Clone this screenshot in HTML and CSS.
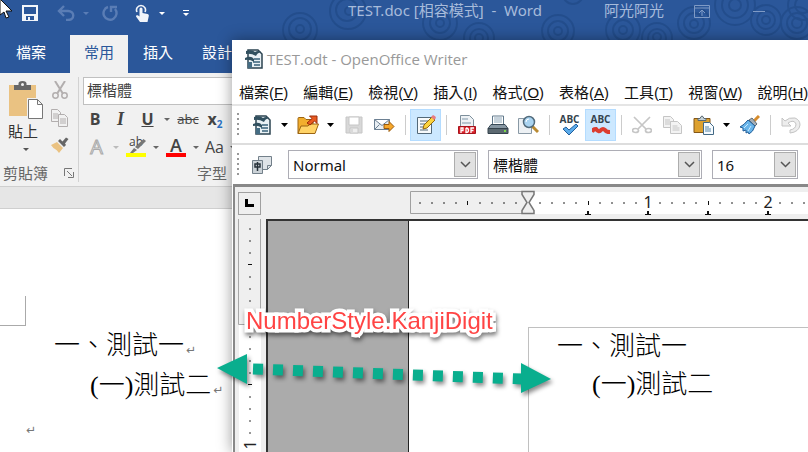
FILE: index.html
```html
<!DOCTYPE html>
<html lang="zh-Hant">
<head>
<meta charset="utf-8">
<title>TEST</title>
<link rel="stylesheet" href="styles.css">
</head>
<body>
<main class="desktop">

<section class="word">
  <header class="word-title">
    <svg class="rings" width="540" height="40" viewBox="0 0 540 40" fill="none" stroke="#204a87" stroke-width="2" aria-hidden="true">
      <g><circle cx="30" cy="29" r="4"/><circle cx="30" cy="29" r="11"/><circle cx="30" cy="30" r="17"/></g>
      <g><circle cx="79" cy="11" r="4"/><circle cx="77" cy="10" r="11"/><circle cx="78" cy="11" r="18"/></g>
      <g><circle cx="170" cy="23" r="4"/><circle cx="170" cy="23" r="10"/><circle cx="170" cy="23" r="17"/></g>
      <g><circle cx="209" cy="38" r="4"/><circle cx="209" cy="38" r="9"/><circle cx="209" cy="38" r="15"/></g>
      <g><circle cx="288" cy="31" r="4"/><circle cx="288" cy="31" r="10"/><circle cx="288" cy="31" r="16"/></g>
      <g><circle cx="353" cy="30" r="4"/><circle cx="353" cy="30" r="10"/><circle cx="353" cy="30" r="17"/></g>
      <g><circle cx="387" cy="37" r="4"/><circle cx="387" cy="38" r="9"/><circle cx="387" cy="38" r="15"/></g>
      <g><circle cx="424" cy="24" r="4"/><circle cx="424" cy="23" r="10"/><circle cx="424" cy="23" r="16"/></g>
      <g><circle cx="465" cy="5" r="6"/><circle cx="465" cy="5" r="13"/><circle cx="465" cy="5" r="20"/></g>
      <g><circle cx="496" cy="20" r="4"/><circle cx="496" cy="20" r="9"/><circle cx="496" cy="20" r="15"/></g>
      <g><circle cx="527" cy="23" r="5"/><circle cx="527" cy="23" r="10"/><circle cx="527" cy="23" r="16"/></g>
      <g><circle cx="533" cy="5" r="8"/><circle cx="533" cy="5" r="15"/><circle cx="303" cy="-6" r="10"/></g>
    </svg>
    <div class="quick">
      <button class="q-save" aria-label="儲存"><svg width="16" height="16" viewBox="0 0 16 16"><path fill="#f2f5fa" fill-rule="evenodd" d="M0 0h16v16H0zM2 2v7h12V2zM4 11v4h2v-3h2v3h4v-4z"/></svg></button>
      <span class="split">
        <button aria-label="復原"><svg width="18" height="16" viewBox="0 0 18 16" fill="none" stroke="#5a7db5" stroke-width="2.4"><path d="M7 1 2 6l5 5M2 6h9c7 0 7 9 0 9H9"/></svg></button>
        <button aria-label="復原清單" class="caret"><svg width="6" height="3"><path fill="#5a7db5" d="M0 0h6L3 3z"/></svg></button>
      </span>
      <button aria-label="取消復原"><svg width="17" height="16" viewBox="0 0 17 16" fill="none" stroke="#5a7db5" stroke-width="2.4"><path d="M6 2a6.500 6.500 0 1 0 7 2M9 7V2h6"/></svg></button>
      <span class="split">
        <button aria-label="觸控模式"><svg width="14" height="18" viewBox="0 0 14 18"><path fill="none" stroke="#f2f5fa" stroke-width="1.600" d="M2 8a4.500 4.500 0 1 1 8 0"/><path fill="#f2f5fa" d="M4.500 5a1.500 1.500 0 0 1 3 0v4l5 1c1 0 1.500 1 1.300 2L12.500 18H5L1 12.500c0-1.500 1.500-2 3.500 0z"/></svg></button>
        <button aria-label="觸控選項" class="caret"><svg width="6" height="3"><path fill="#fff" d="M0 0h6L3 3z"/></svg></button>
      </span>
      <button aria-label="自訂快速存取工具列"><svg width="6" height="7"><path fill="#fff" d="M0 0h6v1H0zM0 3h6L3 6z"/></svg></button>
    </div>
    <h1 class="word-name">TEST.doc [相容模式]&nbsp; -&nbsp; Word</h1>
    <div class="account">
      <span>阿光阿光</span>
      <button aria-label="功能區顯示選項"><svg width="16" height="13" viewBox="0 0 16 13" fill="none" stroke="#7f9ac5"><path d="M.5.5h15v12H.5zM.5 3h15M8 11V5M5 8l3-3 3 3"/></svg></button>
      <button aria-label="最小化"><svg width="12" height="1"><path fill="#7f9ac5" d="M0 0h12v1H0z"/></svg></button>
    </div>
    <svg class="pointer" width="13" height="19" viewBox="0 0 13 19" aria-hidden="true"><path fill="#fff" stroke="#111" d="M0-1v16l4-3 2 6 3-1-3-6h6z"/></svg>
  </header>

  <nav class="tabs">
    <button class="file">檔案</button>
    <button class="active">常用</button>
    <button>插入</button>
    <button>設計</button>
  </nav>

  <div class="ribbon">
    <div class="group clipboard">
      <div class="clip-body">
        <button class="paste">
          <svg width="36" height="40" viewBox="0 0 36 40"><path fill="#eac282" d="M1 4h27v31H1z"/><path fill="#666" d="M6 4h4.500V2.500q0-2.500 4-2.500t4 2.500V4H23v5H6z"/><circle cx="14.500" cy="3.500" r="1.500" fill="#f1f1f1"/><path fill="#fff" stroke="#f1f1f1" stroke-width="3" d="M20.500 18.500h9l5 5v14h-14z"/><path fill="#fff" stroke="#777" d="M20.500 18.500h9l5 5v14h-14zM29.500 18.500v5h5"/></svg>
          <span>貼上</span>
          <svg width="6" height="3"><path fill="#555" d="M0 0h6L3 3z"/></svg>
        </button>
        <div class="clip-side">
          <button aria-label="剪下"><svg width="16" height="18" viewBox="0 0 16 18" fill="none" stroke="#b2aeae" stroke-width="1.500"><circle cx="3.500" cy="14.500" r="2.700"/><circle cx="12.500" cy="14.500" r="2.700"/><path stroke-width="2" d="M3 0l7.500 12M13 0 5.500 12"/></svg></button>
          <button aria-label="複製"><svg width="18" height="18" viewBox="0 0 18 18" fill="#f1f1f1" stroke="#b2aeae"><path d="M.5.5h6l3 3v9h-9zM2 5h5M2 7h5M2 9h5"/><path d="M7.500 5.500h6l3 3v9h-9zM9 10h6M9 12h6M9 14h6"/></svg></button>
          <button aria-label="複製格式"><svg width="18" height="16" viewBox="0 0 18 16"><path fill="#eac282" d="M0 8l6-3 6 6-4 5q-2-3-4-4T0 8z"/><path fill="#666" d="M7 4l2-2 2.500 2.500L15 .5 17.500 2 14 6.500l1 1.500-2 2z"/></svg></button>
        </div>
      </div>
      <div class="group-label"><span>剪貼簿</span><button aria-label="剪貼簿選項"><svg width="10" height="10" viewBox="0 0 10 10" fill="none" stroke="#777"><path d="M.5 8V.5H8M3 3l5 5M9.500 4v5.500H4"/></svg></button></div>
    </div>
    <div class="group font">
      <input class="font-name" aria-label="字型名稱" value="標楷體">
      <div class="font-row">
        <button class="w-b">B</button><button class="w-i">I</button>
        <button class="w-u">U</button><button class="caret" aria-label="底線樣式"><svg width="6" height="3"><path fill="#666" d="M0 0h6L3 3z"/></svg></button>
        <button class="w-s">abc</button><button class="w-x">x<sub>2</sub></button>
      </div>
      <div class="font-row">
        <button class="w-fx">A</button><button class="caret" aria-label="文字效果"><svg width="6" height="3"><path fill="#bbb" d="M0 0h6L3 3z"/></svg></button>
        <button class="swatch yellow" aria-label="醒目提示"><span>ab</span><svg width="16" height="14" viewBox="0 0 16 14"><path fill="#777" d="M13.500 0 16 2 8 10 5 8zM4 9l3 2-4 3H0z"/></svg></button><button class="caret" aria-label="醒目提示色彩"><svg width="6" height="3"><path fill="#666" d="M0 0h6L3 3z"/></svg></button>
        <button class="swatch red">A</button><button class="caret" aria-label="字型色彩"><svg width="6" height="3"><path fill="#666" d="M0 0h6L3 3z"/></svg></button>
        <button class="w-aa">Aa</button><button class="caret" aria-label="大小寫"><svg width="6" height="3"><path fill="#666" d="M0 0h6L3 3z"/></svg></button>
      </div>
      <div class="group-label">字型</div>
    </div>
  </div>
  <div class="strip"></div>
  <article class="word-page">
    <div class="crop-mark"></div>
    <p class="kai first">一、測試一<i>↵</i></p>
    <p class="kai second">(一)測試二<i>↵</i></p>
    <p class="kai empty"><i>↵</i></p>
  </article>
</section>

<section class="writer">
  <header class="writer-title">
    <svg width="18" height="20" viewBox="0 0 18 20"><path fill="#e9f1f5" stroke="#2b4350" stroke-width="1.500" d="M3 1h10l4 4v14H3z"/><path fill="#31505f" d="M1 2q6-2 9 1 3-2 6 0-4 1-5 4Q6 4 1 5zM0 9q6-3 9 1v3Q5 10 0 11z"/><path fill="#456d84" d="M3 13h4v6H3z"/><path stroke="#39627a" stroke-width="1.500" d="M9 10h6M8 13h7M9 16h6"/></svg>
    <h2>TEST.odt - OpenOffice Writer</h2>
  </header>
  <nav class="menu">
    <button>檔案(<u>F</u>)</button><button>編輯(<u>E</u>)</button><button>檢視(<u>V</u>)</button><button>插入(<u>I</u>)</button><button>格式(<u>O</u>)</button><button>表格(<u>A</u>)</button><button>工具(<u>T</u>)</button><button>視窗(<u>W</u>)</button><button>說明(<u>H</u>)</button>
  </nav>

  <div class="bar">
    <span class="grip"></span>
    <button class="tool" aria-label="開新檔案"><svg width="18" height="20" viewBox="0 0 18 20"><path fill="#e9f1f5" stroke="#2b4350" stroke-width="1.500" d="M3 1h10l4 4v14H3z"/><path fill="#31505f" d="M1 2q6-2 9 1 3-2 6 0-4 1-5 4Q6 4 1 5zM0 9q6-3 9 1v3Q5 10 0 11z"/><path fill="#456d84" d="M3 13h4v6H3z"/><path stroke="#39627a" stroke-width="1.500" d="M9 10h6M8 13h7M9 16h6"/></svg></button>
    <button class="drop" aria-label="新增類型"><svg width="7" height="4"><path d="M0 0h7L3.500 4z"/></svg></button>
    <button class="tool" aria-label="開啟"><svg width="22" height="20" viewBox="0 0 22 20"><path fill="#f2ae2e" stroke="#9c6512" d="M1 18.500V3.500q0-1 1-1h5l2 2h7v6"/><path fill="#ffd367" stroke="#9c6512" d="M1 18.500 4 11h7l2-2h8.500L18 18.500z"/><path fill="#e85a20" stroke="#9a2c0b" d="M10 8l5-4.500L12.500 1H20v7.500L17.500 6 13 10z"/></svg></button>
    <button class="drop" aria-label="最近文件"><svg width="7" height="4"><path d="M0 0h7L3.500 4z"/></svg></button>
    <button class="tool" aria-label="儲存檔案"><svg width="18" height="18" viewBox="0 0 18 18" stroke="#c6c6c6"><path fill="#d8d8d8" d="M1 1h16v16H1z"/><path fill="#fff" d="M4 1h10v8H4z"/><path fill="#eee" d="M5 12h8v5H5z"/><path d="M7 13v3"/></svg></button>
    <button class="tool" aria-label="郵件"><svg width="21" height="16" viewBox="0 0 21 16"><path fill="#e8eef3" stroke="#6c8093" d="M.5 2.500h15v10H.5zl7.500 6 7.500-6M.5 12.500l5-5M15.500 12.500l-5-5"/><path fill="#f6a72a" stroke="#9b5a0b" d="M10 7.500h5V4.500l5 5-5 5v-3h-5z"/></svg></button>
    <span class="sep"></span>
    <button class="tool on" aria-label="編輯檔案"><svg width="20" height="20" viewBox="0 0 20 20"><path fill="#f8fafb" stroke="#536979" d="M1.500 2.500h14v16h-14z"/><path stroke="#536979" d="M4 6h8M4 9h6M4 12h4M4 15h8"/><path fill="#fbd33e" stroke="#94660c" d="M7 14l1-4 8-8 3 3-8 8z"/><path fill="#e77c83" d="M15 2l2-2q3 1 3 3l-2 2z"/></svg></button>
    <span class="sep"></span>
    <button class="tool" aria-label="匯出成 PDF"><svg width="18" height="20" viewBox="0 0 18 20"><path fill="#eef2f5" stroke="#7d8f9b" d="M2.500.5h9l4 4v14h-13z"/><path fill="#b7c5cf" d="M4 3h6v2H4zM4 7h9v2H4z"/><path fill="#d9222a" stroke="#a6131c" d="M.5 11.500h17v7H.5z"/><path fill="none" stroke="#fff" stroke-width="1.300" d="M3 18v-5h2v2.500H3M8 13v4.500q2.500 0 2.500-2.200T8 13M13 18v-5h3M13 15.500h2.500"/></svg></button>
    <button class="tool" aria-label="列印"><svg width="22" height="20" viewBox="0 0 22 20"><path fill="#fff" stroke="#60798b" d="M5.500 1h11v9h-11z"/><path stroke="#8ea6b8" d="M7 3h8M7 5h8M7 7h8"/><path fill="#8797a3" stroke="#394a57" d="M4 9.500h14l3 4H1z"/><path fill="#5b6870" stroke="#34424c" d="M1 13.500h20v5H1z"/><path fill="#7bda4b" d="M17 15h2v2h-2z"/></svg></button>
    <button class="tool" aria-label="頁面預覽"><svg width="21" height="20" viewBox="0 0 21 20"><path fill="#edf1f4" stroke="#8999a5" d="M.5 3.500h13v15H.5z"/><path fill="none" stroke="#b98a32" stroke-width="3" d="M14 11l6 6"/><circle cx="11" cy="7" r="5.500" fill="#aad4f1" stroke="#526b7c" stroke-width="1.500"/><path stroke="#fff" fill="none" d="M8 7q0-3 3-3"/></svg></button>
    <span class="sep"></span>
    <button class="tool abc" aria-label="拼寫檢查"><span>ABC</span><svg width="18" height="12" viewBox="0 0 18 12"><path fill="#5babea" stroke="#205f9d" d="M2 5l3-2 3 3 7-6 2 2-9 9z"/></svg></button>
    <button class="tool abc on" aria-label="自動拼寫檢查"><span>ABC</span><svg width="18" height="12" viewBox="0 0 18 12"><path fill="none" stroke="#dc3d2f" stroke-width="4" d="M0 8q1-3 4-3 3 4 5 1 2-2 4 0 1 2 5 2"/></svg></button>
    <span class="sep"></span>
    <button class="tool" aria-label="剪下"><svg width="20" height="18" viewBox="0 0 20 18" fill="none" stroke="#c6c6c6" stroke-width="1.700"><path d="M2 1l12 12M18 1 6 13"/><ellipse cx="3.500" cy="14.500" rx="3" ry="2"/><ellipse cx="16.500" cy="14.500" rx="3" ry="2"/></svg></button>
    <button class="tool" aria-label="複製"><svg width="19" height="18" viewBox="0 0 19 18" fill="#f3f3f3" stroke="#c5c5c5"><path d="M.5.500h7l3 3v8H.5zM2 4h5M2 6h6M2 8h6"/><path d="M7.500 5.500h7l4 4v8h-11zM9.500 10h5M9.500 12h7M9.500 14h7"/></svg></button>
    <button class="tool" aria-label="貼上"><svg width="21" height="20" viewBox="0 0 21 20"><path fill="#dda12f" stroke="#835719" d="M1 3.500h16v14H1z"/><path fill="#c4d0d7" stroke="#596973" d="M5 5.500v-2h2q2-5 4 0h2v2z"/><path fill="#f6fbff" stroke="#426985" d="M10.500 7.500h6l4 4v8h-10z"/><path stroke="#5986a6" d="M12 12h4M12 14h6M12 16h6"/></svg></button>
    <button class="drop" aria-label="貼上選項"><svg width="7" height="4"><path d="M0 0h7L3.500 4z"/></svg></button>
    <button class="tool" aria-label="格式刷"><svg width="21" height="20" viewBox="0 0 21 20"><path stroke="#d68c2d" stroke-width="3" d="M14 7l6-6"/><path fill="#a5afb7" stroke="#606d78" d="M10 5l3-2 5 6-2 2z"/><path fill="#69b5ea" stroke="#235f9a" d="M9 5l7 6q-2 6-6 8l-1-2-2 1v-3l-3 1v-3l-3-1Q5 10 9 5z"/><path stroke="#cceaff" d="M9 9l-4 4M12 11l-3 5"/></svg></button>
    <span class="sep"></span>
    <button class="tool" aria-label="復原"><svg width="20" height="18" viewBox="0 0 20 18"><path fill="#ededed" stroke="#c4c4c4" d="M1 2l3 3q4-4 10-3 5 2 5 7-1 7-10 8v-3q6-1 6-6-2-5-8-1l3 3H1z"/></svg></button>
  </div>

  <div class="bar format">
    <span class="grip"></span>
    <button class="tool" aria-label="樣式和格式"><svg width="20" height="20" viewBox="0 0 20 20" fill="#dfe4e8" stroke="#73808a"><path d="M6.500 1.500h13v9l-4 4h-9zM15.500 14.500v-4h4"/><path fill="#cbd2d7" d="M.5 5.500h10v13H.5z"/><path stroke="#26313a" stroke-width="1.500" d="M3 9h5v3H3zM5.500 7v9"/></svg></button>
    <label class="combo style"><select aria-label="套用樣式"><option>Normal</option></select><span class="combo-arrow"><svg width="11" height="7" viewBox="0 0 11 7" fill="none" stroke="#555" stroke-width="1.500"><path d="M1 1l4.500 4.500L10 1"/></svg></span></label>
    <label class="combo face"><select aria-label="字型名稱"><option>標楷體</option></select><span class="combo-arrow"><svg width="11" height="7" viewBox="0 0 11 7" fill="none" stroke="#555" stroke-width="1.500"><path d="M1 1l4.500 4.500L10 1"/></svg></span></label>
    <label class="combo size"><select aria-label="字型大小"><option>16</option></select><span class="combo-arrow"><svg width="11" height="7" viewBox="0 0 11 7" fill="none" stroke="#555" stroke-width="1.500"><path d="M1 1l4.500 4.500L10 1"/></svg></span></label>
  </div>

  <div class="workspace">
    <div class="ruler-row">
      <button class="corner" aria-label="定位點"><svg width="9" height="8"><path d="M0 0h3v5h6v3H0z"/></svg></button>
      <svg class="h-ruler" width="100%" height="26" aria-hidden="true">
        <path fill="#fff" d="M118 2h1900v22H118z"/>
        <path fill="#efefef" stroke="#a0a0a0" stroke-width="1" d="M.5 1.500h118v22H.5z"/>
        <path stroke="#222" stroke-dasharray="2 10" d="M9 13h40M69 13h40M129 13h40M189 13h40M249 13h40M309 13h40M369 13h50"/>
        <path fill="#111" d="M57 11h1v4h-1zM178 11h1v4h-1zM298 11h1v4h-1zM175 24h6v1h-6zM177 21h2v3h-2zM235 24h6v1h-6zM237 21h2v3h-2zM295 24h6v1h-6zM297 21h2v3h-2zM355 24h6v1h-6zM357 21h2v3h-2z"/>
        <text x="238" y="18" text-anchor="middle">1</text><text x="358" y="18" text-anchor="middle">2</text>
        <path fill="#eee" stroke="#777" stroke-width="1.500" d="M112 1.500h12v3l-5 8 5 8v3h-12v-3l5-8-5-8z"/>
      </svg>
    </div>
    <div class="canvas-row">
      <svg class="v-ruler" width="24" height="100%" aria-hidden="true">
        <path fill="#fff" d="M1 105h22v1900H1z"/>
        <path fill="#efefef" stroke="#a8a8a8" d="M.5 0v105.500h22V0"/>
        <path stroke="#333" stroke-dasharray="2 10" d="M12 9v28M12 57v40M12 117v40M12 177v40"/>
        <path fill="#111" d="M10 45h4v1h-4zM10 165h4v1h-4z"/>
        <text transform="translate(18 226) rotate(-90)" text-anchor="middle">1</text>
      </svg>
      <div class="canvas">
        <article class="writer-page">
          <div class="text-frame">
            <p class="kai">一、測試一</p>
            <p class="kai indent">(一)測試二</p>
          </div>
        </article>
      </div>
    </div>
  </div>
</section>

<svg class="link-arrow" width="350" height="60" viewBox="0 0 350 60" aria-hidden="true">
  <g fill="#09ae8e"><path d="M7 18 37 4v30zM341 29l-30-16v30z"/><path fill="none" stroke="#09ae8e" stroke-width="11" stroke-dasharray="10 10" d="M43 19l270 10"/></g>
</svg>
<div class="callout">NumberStyle.KanjiDigit</div>
</main>
</body>
</html>
```
FILE: styles.css
```css
* { box-sizing: border-box; }
body { margin: 0; font: 15px/20px "Open Sans", "Noto Sans CJK TC", sans-serif; color: #222; }
h1, h2, p { margin: 0; font-size: 15px; font-weight: 400; }
button { border: 0; padding: 0; background: none; font: inherit; color: inherit; display: flex; align-items: center; justify-content: center; flex: none; }
svg { display: block; flex: none; }

.desktop { position: relative; height: 100vh; overflow: hidden; background: #fff; }

/* Word window */
.word { display: flex; flex-direction: column; height: 100%; }
.word-title { position: relative; display: flex; height: 35px; background: #2b579a; color: #a7bbda; white-space: nowrap; flex: none; }
.rings { position: absolute; left: 270px; top: 0; opacity: .7; }
.pointer { position: absolute; left: 0; top: 0; }
.quick { display: flex; gap: 4px; padding-left: 12px; height: 26px; flex: none; }
.quick button { width: 28px; }
.quick .q-save { width: 36px; }
.quick .caret { width: 12px; }
.split { display: flex; }
.word-name { position: relative; margin-left: 148px; font-family: "Noto Sans", "Noto Sans CJK TC", sans-serif; line-height: 20px; }
.account { position: relative; display: flex; height: 22px; align-items: center; margin-left: 62px; }
.account span { line-height: 20px; height: 22px; }
.account button { margin-left: 30px; }
.account button + button { margin-left: 43px; }

.tabs { display: flex; gap: 1px; height: 38px; background: #2b579a; color: #fff; flex: none; }
.tabs button { padding: 0 14px 4px; }
.tabs .file { width: 62px; margin-right: 7px; }
.tabs .active { background: #f1f1f1; color: #2b579a; }

.ribbon { display: flex; height: 113px; padding: 4px 0; background: #f1f1f1; flex: none; overflow: hidden; }
.group { display: flex; flex-direction: column; flex: none; color: #666; }
.clipboard { width: 79px; border-right: 1px solid #d2d2d2; }
.clip-body { display: flex; flex: 1; gap: 7px; padding: 4px 0 0 8px; }
.paste { flex-direction: column; justify-content: flex-start; width: 36px; color: #333; }
.paste span { align-self: flex-start; line-height: 20px; margin-bottom: 7px; }
.clip-side { display: flex; flex-direction: column; gap: 10px; }
.group-label { display: flex; height: 22px; padding-left: 3px; gap: 16px; align-items: center; line-height: 20px; margin-bottom: -2px; }
.font { width: 266px; padding-left: 4px; }
.font .group-label { justify-content: center; padding: 0 4px 0 0; margin-top: auto; }
.font-name { width: 180px; height: 28px; border: 1px solid #c0c0c0; padding: 0 3px 3px; font: inherit; color: #444; background: #fff; border-radius: 0; }
.font-row { display: flex; height: 28px; align-items: center; color: #444; font-size: 16px; }
.font-row button { width: 27px; height: 24px; }
.font-row .caret { width: 12px; }
.font-row .w-b { width: 24px; font-weight: 700; }
.w-i { font: italic 700 18px "Liberation Serif", serif; }
.w-u { font-weight: 700; text-decoration: underline; }
.font-row .w-s { width: 30px; font-size: 13px; text-decoration: line-through; }
.font-row .w-x { width: 24px; font-weight: 700; }
.w-x sub { font-size: 10px; color: #2b72c4; align-self: flex-end; line-height: 14px; }
.w-fx { color: #eee; font-size: 20px; -webkit-text-stroke: 1px #aaa; }
.swatch { position: relative; border-bottom: 4px solid; }
.font-row .swatch { width: 20px; height: 20px; margin: 0 4px; }
.swatch.yellow { border-color: #ff0; font-size: 12px; align-items: flex-start; line-height: 10px; }
.swatch.yellow svg { position: absolute; left: 4px; top: 2px; }
.swatch.red { border-color: #f00; font-size: 18px; font-weight: 600; }
.font-row .w-aa { width: 25px; }

.strip { height: 23px; border: solid #cfcfcf; border-width: 1px 0; background: #e6e6e6; flex: none; }
.word-page { flex: 1; background: #fff; }
.crop-mark { width: 26px; height: 30px; margin-top: 87px; border: solid #aaa; border-width: 0 1px 1px 0; }
.kai { font: 26px/40px "Liberation Serif", "Noto Sans CJK TC", serif; font-weight: 300; color: #000; white-space: nowrap; }
.kai i { font: 12px/12px "DejaVu Sans", sans-serif; color: #777; margin-left: 2px; }
.first { padding-left: 54px; }
.second { padding-left: 90px; }
.empty { padding-left: 24px; }

/* Writer window */
.writer { position: absolute; left: 232px; top: 40px; right: 0; bottom: 0; display: flex; flex-direction: column; background: #fff; box-shadow: 0 0 14px rgba(0, 0, 0, .4); overflow: hidden; }
.writer-title { display: flex; align-items: center; gap: 4px; height: 37px; padding-left: 13px; color: #999; flex: none; }
.menu { display: flex; gap: 15px; height: 29px; padding: 4px 0 0 7px; border-bottom: 2px solid #e5e5e5; color: #111; flex: none; white-space: nowrap; font-family: "Liberation Sans", "Noto Sans CJK TC", sans-serif; }
.bar { display: flex; height: 39px; align-items: center; padding-left: 5px; border-bottom: 2px solid #ddd; flex: none; }
.grip { width: 9px; height: 24px; background: repeating-linear-gradient(#999 0 2px, transparent 2px 5px) no-repeat left / 2px 100%; flex: none; }
.tool { width: 31px; height: 32px; }
.tool.on { background: #cce8ff; border: 1px solid #b4dcff; }
.drop { width: 15px; }
.sep { width: 10px; height: 20px; background: linear-gradient(#ccc, #ccc) no-repeat center / 1px 100%; flex: none; }
.abc { flex-direction: column; font: 700 10px/10px "Open Sans", sans-serif; color: #34434d; }
.format { border-bottom: 0; }
.combo { display: flex; position: relative; height: 29px; margin-left: 10px; flex: none; }
.style { width: 190px; margin-left: 11px; }
.face { width: 214px; }
.size { width: 86px; }
.combo select { appearance: none; width: 100%; border: 1px solid #adadb5; border-radius: 0; background: #fff; padding: 0 4px; font: 15px "Noto Sans", "Noto Sans CJK TC", sans-serif; color: #111; }
.combo-arrow { position: absolute; right: 2px; top: 2px; bottom: 2px; width: 22px; display: flex; align-items: center; justify-content: center; background: #e1e1e1; border: 1px solid #adadad; pointer-events: none; }

.workspace { flex: 1; display: flex; flex-direction: column; margin-left: 1px; border: solid #888; border-width: 3px 0 0 2px; background: #efefef; min-height: 0; }
.ruler-row { display: flex; align-items: center; height: 32px; padding-left: 3px; gap: 149px; flex: none; }
.corner { width: 23px; height: 23px; border: 1px solid #a0a0a0; }
.h-ruler { flex: 1; min-width: 0; }
.workspace text { font: 16px "Noto Sans", sans-serif; fill: #222; }
.canvas-row { display: flex; flex: 1; min-height: 0; padding-left: 3px; gap: 4px; }
.canvas { flex: 1; border: solid #333; border-width: 2px 0 0 2px; background: #ababab; padding-left: 140px; }
.writer-page { height: 100%; border-left: 1px solid #222; background: #fff; padding: 106px 0 0 119px; }
.text-frame { height: 100%; border: solid #c0c0c0; border-width: 1px 0 0 1px; padding: 0 0 0 28px; }
.text-frame .kai { line-height: 38px; }
.indent { padding-left: 35px; }

/* Annotation */
.link-arrow { position: absolute; left: 210px; top: 350px; filter: drop-shadow(2px 3px 2px rgba(0, 0, 0, .45)); }
.callout { position: absolute; left: 246px; top: 306px; font: 24px/30px "Liberation Sans", sans-serif; color: #ff4444; -webkit-text-stroke: 7px #fff; paint-order: stroke fill; filter: drop-shadow(1px 3px 2px rgba(0, 0, 0, .5)); white-space: nowrap; }
```
